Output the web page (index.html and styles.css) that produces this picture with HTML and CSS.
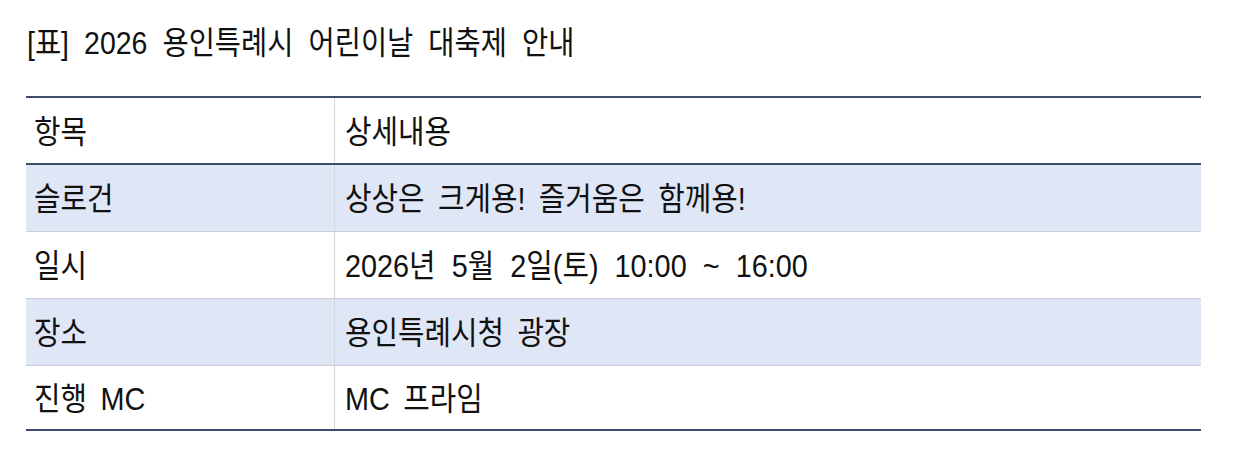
FILE: index.html
```html
<!DOCTYPE html>
<html lang="ko">
<head>
<meta charset="utf-8">
<title>2026 용인특례시 어린이날 대축제 안내</title>
<link rel="stylesheet" href="styles.css">
</head>
<body>
<div class="page">
  <h1 class="title"><span class="squeeze">[표] 2026 용인특례시 어린이날 대축제 안내</span></h1>
  <table class="info">
    <thead>
      <tr class="head">
        <th class="c1"><span class="txt">항목</span></th>
        <th class="c2"><span class="txt">상세내용</span></th>
      </tr>
    </thead>
    <tbody>
      <tr class="alt">
        <td class="c1"><span class="txt">슬로건</span></td>
        <td class="c2"><span class="txt">상상은 크게용! 즐거움은 함께용!</span></td>
      </tr>
      <tr>
        <td class="c1"><span class="txt">일시</span></td>
        <td class="c2"><span class="txt num">2026년 5월 2일(토) 10:00 ~ 16:00</span></td>
      </tr>
      <tr class="alt">
        <td class="c1"><span class="txt">장소</span></td>
        <td class="c2"><span class="txt">용인특례시청 광장</span></td>
      </tr>
      <tr class="last">
        <td class="c1"><span class="txt">진행 MC</span></td>
        <td class="c2"><span class="txt">MC 프라임</span></td>
      </tr>
    </tbody>
  </table>
</div>
</body>
</html>
```

FILE: styles.css
```css
html, body {
  margin: 0;
  padding: 0;
  background: #ffffff;
}

.page {
  padding: 24px 0 0 26px;
  font-family: "Liberation Sans", "Noto Sans CJK KR", sans-serif;
  color: #111111;
}

.title {
  margin: 0 0 34px 1px;
  font-weight: normal;
  font-size: 32px;
  line-height: 38px;
  white-space: nowrap;
}

.squeeze {
  display: inline-block;
  transform: scaleX(0.89);
  transform-origin: left center;
  word-spacing: 8px;
}

.info {
  width: 1175px;
  border-collapse: collapse;
  border-top: 2px solid #3e4e6a;
  border-bottom: 2px solid #3e4e6a;
}

.info th,
.info td {
  font-weight: normal;
  font-size: 32px;
  text-align: left;
  height: 66px;
  padding: 0;
  vertical-align: middle;
  border-bottom: 1px solid #c9cdd6;
  white-space: nowrap;
}

.info .head th {
  height: 65px;
  border-bottom: 2px solid #3e4e6a;
}

.info .last td {
  height: 63px;
  border-bottom: none;
}

.info .c1 {
  width: 300px;
  padding-left: 8px;
  border-right: 1px solid #d3d7de;
}

.info .c2 {
  padding-left: 10px;
}

.alt td {
  background: #dfe6f6;
}

.txt {
  display: inline-block;
  margin-top: -4px;
  transform: scaleX(0.9);
  transform-origin: left center;
  word-spacing: 6px;
}

.txt.num {
  word-spacing: 9px;
}
```
